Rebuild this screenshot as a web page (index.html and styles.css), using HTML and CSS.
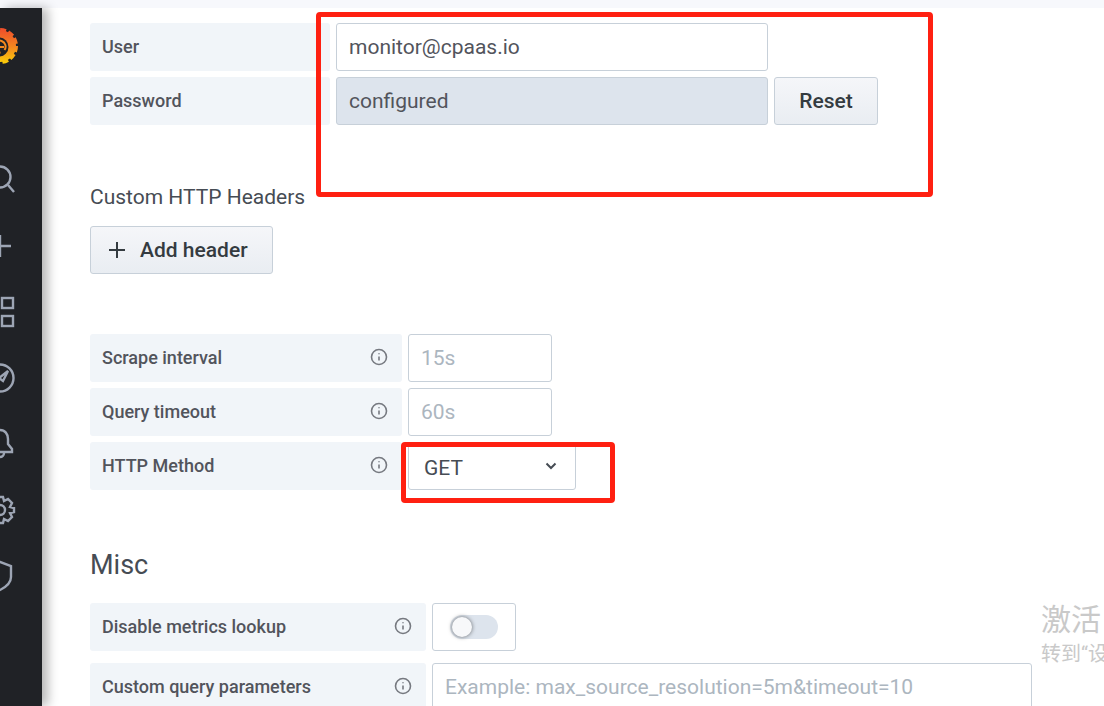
FILE: index.html
```html
<!DOCTYPE html>
<html lang="zh-CN">
<head>
    <meta charset="UTF-8">
    <meta name="viewport" content="width=device-width, initial-scale=1.0">
    <title>Data Sources - Grafana</title>
    <link rel="stylesheet" href="styles.css">
</head>
<body>
    <div class="top-strip"></div>
    <div class="app">
        <nav class="sidemenu">
            <div class="logo-item">
                <svg viewBox="0 0 40 40" width="40" height="40">
                    <defs>
                        <linearGradient id="logo-grad" x1="0" y1="0" x2="0" y2="1">
                            <stop offset="0" stop-color="#f0512a"/>
                            <stop offset="0.55" stop-color="#f58a1f"/>
                            <stop offset="1" stop-color="#fbca0a"/>
                        </linearGradient>
                    </defs>
                    <circle cx="20" cy="20" r="16.5" fill="none" stroke="url(#logo-grad)" stroke-width="3" stroke-dasharray="6 2.6"/>
                    <circle cx="20" cy="20" r="16" fill="url(#logo-grad)"/>
                    <circle cx="19" cy="21" r="9.5" fill="#202226"/>
                    <path d="M24.5 24a6 6 0 1 0-4 2.5" fill="none" stroke="#f58a1f" stroke-width="2"/>
                    <path d="M16 21h8" stroke="#f58a1f" stroke-width="2"/>
                </svg>
            </div>
            <div class="nav-item">
                <svg viewBox="0 0 32 32" width="32" height="32"><circle cx="16" cy="13" r="10.5"/><path d="M24 21l6 7"/></svg>
            </div>
            <div class="nav-item">
                <svg viewBox="0 0 32 32" width="32" height="32"><path d="M16 5v22M5 16h22"/></svg>
            </div>
            <div class="nav-item">
                <svg viewBox="0 0 32 32" width="32" height="32"><rect x="3" y="2" width="11" height="10"/><rect x="18" y="2" width="11" height="10"/><rect x="3" y="20" width="11" height="10"/><rect x="18" y="20" width="11" height="10"/></svg>
            </div>
            <div class="nav-item">
                <svg viewBox="0 0 32 32" width="32" height="32"><circle cx="16" cy="16" r="13.5"/><path d="M24 9l-5 10-4-3z"/></svg>
            </div>
            <div class="nav-item">
                <svg viewBox="0 0 32 32" width="32" height="32"><path d="M16 2c5 0 8 4 8 9v5l4 5v3H4v-3l4-5v-5c0-5 3-9 8-9z"/><path d="M12 25a4 4 0 0 0 8 0"/></svg>
            </div>
            <div class="nav-item">
                <svg viewBox="0 0 32 32" width="32" height="32"><circle cx="16" cy="16" r="5"/><path d="M13 3h6l1 4 4-2 4 4-2 4 4 1v4l-4 1 2 4-4 4-4-2-1 4h-6l-1-4-4 2-4-4 2-4-4-1v-4l4-1-2-4 4-4 4 2z"/></svg>
            </div>
            <div class="nav-item">
                <svg viewBox="0 0 32 32" width="32" height="32"><path d="M16 2l11 4v11c0 6-5 10-11 13C10 27 5 23 5 17V6z"/></svg>
            </div>
        </nav>

        <main class="content">
            <div class="form-row">
                <label class="form-label label-auth">User</label>
                <div class="form-input input-auth input-value">monitor@cpaas.io</div>
            </div>
            <div class="form-row">
                <label class="form-label label-auth">Password</label>
                <div class="form-input input-auth input-configured">configured</div>
                <button class="btn btn-reset">Reset</button>
            </div>

            <h6 class="subheading">Custom HTTP Headers</h6>
            <button class="btn btn-add">
                <svg viewBox="0 0 18 18" width="18" height="18"><path d="M9 1v16M1 9h16"/></svg>
                Add header
            </button>

            <div class="prom-settings">
                <div class="form-row">
                    <label class="form-label label-prom">Scrape interval
                        <svg class="info" viewBox="0 0 18 18" width="18" height="18"><circle cx="9" cy="9" r="7.5"/><path d="M9 8.5v4"/><path d="M9 5.2v1"/></svg>
                    </label>
                    <div class="form-input input-small input-placeholder">15s</div>
                </div>
                <div class="form-row">
                    <label class="form-label label-prom">Query timeout
                        <svg class="info" viewBox="0 0 18 18" width="18" height="18"><circle cx="9" cy="9" r="7.5"/><path d="M9 8.5v4"/><path d="M9 5.2v1"/></svg>
                    </label>
                    <div class="form-input input-small input-placeholder">60s</div>
                </div>
                <div class="form-row">
                    <label class="form-label label-prom">HTTP Method
                        <svg class="info" viewBox="0 0 18 18" width="18" height="18"><circle cx="9" cy="9" r="7.5"/><path d="M9 8.5v4"/><path d="M9 5.2v1"/></svg>
                    </label>
                    <div class="form-input select-method">
                        <span class="select-value">GET</span>
                        <svg viewBox="0 0 12 8" width="12" height="8"><path d="M1.5 1.5L6 6l4.5-4.5"/></svg>
                    </div>
                </div>
            </div>

            <h3 class="section-title">Misc</h3>
            <div class="form-row">
                <label class="form-label label-misc">Disable metrics lookup
                    <svg class="info" viewBox="0 0 18 18" width="18" height="18"><circle cx="9" cy="9" r="7.5"/><path d="M9 8.5v4"/><path d="M9 5.2v1"/></svg>
                </label>
                <div class="switch-box"><span class="switch"><span class="switch-knob"></span></span></div>
            </div>
            <div class="form-row form-row-misc">
                <label class="form-label label-misc">Custom query parameters
                    <svg class="info" viewBox="0 0 18 18" width="18" height="18"><circle cx="9" cy="9" r="7.5"/><path d="M9 8.5v4"/><path d="M9 5.2v1"/></svg>
                </label>
                <div class="form-input input-params input-placeholder">Example: max_source_resolution=5m&amp;timeout=10</div>
            </div>
        </main>
    </div>

    <div class="mark mark-auth"></div>
    <div class="mark mark-method"></div>

    <div class="watermark">
        <div class="watermark-title">激活</div>
        <div class="watermark-text">转到“设</div>
    </div>
</body>
</html>
```

FILE: styles.css
```css
* {
    box-sizing: border-box;
}
html, body {
    height: 100%;
}
body {
    margin: 0;
    font-family: 'Roboto', 'Noto Sans CJK SC', sans-serif;
    color: #464c54;
    background: white;
    overflow: hidden;
    position: relative;
}
.top-strip {
    height: 8px;
    background-color: #f7f8fc;
}
.app {
    display: flex;
    height: 698px;
}
.sidemenu {
    width: 42px;
    flex: none;
    background-color: #202226;
    box-shadow: 6px 0 10px rgba(0, 0, 0, 0.28);
    overflow: hidden;
    padding-top: 18px;
    z-index: 1;
}
.logo-item {
    height: 40px;
    margin-left: -20px;
    margin-bottom: 81px;
}
.nav-item {
    height: 66px;
    margin-left: -16px;
    display: flex;
    align-items: center;
}
.nav-item svg {
    fill: none;
    stroke: #9da5b4;
    stroke-width: 2.4;
    flex: none;
}
.content {
    flex: 1;
    padding: 15px 0 0 48px;
}
.form-row {
    display: flex;
    gap: 6px;
    margin-bottom: 6px;
}
.form-label {
    height: 48px;
    display: flex;
    align-items: center;
    justify-content: space-between;
    padding: 0 14px 2px 12px;
    font-size: 18px;
    font-weight: 500;
    color: #52545c;
    background-color: #f1f5f9;
    border-radius: 3px;
}
.label-auth {
    width: 240px;
}
.label-prom {
    width: 312px;
}
.label-misc {
    width: 336px;
}
.info {
    fill: none;
    stroke: #767980;
    stroke-width: 1.6;
}
.form-input {
    height: 48px;
    display: flex;
    align-items: center;
    padding: 0 12px;
    font-size: 21px;
    border: 1px solid #c7d0d9;
    border-radius: 3px;
    background-color: white;
}
.input-auth {
    width: 432px;
}
.input-value {
    color: #52545c;
}
.input-configured {
    background-color: #dde4ed;
    color: #52545c;
}
.input-small {
    width: 144px;
}
.input-placeholder {
    color: #acb6bf;
}
.input-params {
    width: 600px;
}
.select-method {
    width: 168px;
    padding: 0 18px 0 15px;
    justify-content: space-between;
    color: #464c54;
}
.select-value {
    padding-top: 3px;
}
.select-method svg {
    fill: none;
    stroke: #464c54;
    stroke-width: 2;
}
.btn {
    height: 48px;
    font-family: inherit;
    font-size: 21px;
    font-weight: 500;
    color: #343b40;
    background: linear-gradient(#f5f6f9, #e9edf2);
    border: 1px solid #c7d0d9;
    border-radius: 3px;
}
.btn-reset {
    width: 104px;
}
.btn-add {
    width: 183px;
    display: flex;
    align-items: center;
    gap: 14px;
    padding: 0 0 0 17px;
}
.btn-add svg {
    fill: none;
    stroke: #343b40;
    stroke-width: 2;
}
.subheading {
    margin: 59px 0 16px;
    height: 26px;
    line-height: 26px;
    font-size: 21px;
    font-weight: 400;
    color: #464c54;
}
.prom-settings {
    margin-top: 60px;
}
.section-title {
    margin: 59px 0 22px;
    height: 32px;
    line-height: 32px;
    font-size: 27px;
    font-weight: 400;
    color: #464c54;
}
.switch-box {
    width: 84px;
    height: 48px;
    display: flex;
    align-items: center;
    padding-left: 17px;
    border: 1px solid #c7d0d9;
    border-radius: 3px;
}
.switch {
    width: 48px;
    height: 24px;
    border-radius: 12px;
    background-color: #dde4ed;
    display: block;
}
.switch-knob {
    display: block;
    width: 20px;
    height: 20px;
    margin: 2px 0 0 2px;
    border-radius: 50%;
    background-color: #f7f8fa;
    box-shadow: 0 0 4px rgba(0, 0, 0, 0.55);
}
.form-row-misc {
    margin-top: 12px;
}
.mark {
    position: absolute;
    border: 5px solid #ff2011;
    border-radius: 4px;
}
.mark-auth {
    left: 316px;
    top: 12px;
    width: 617px;
    height: 185px;
}
.mark-method {
    left: 401px;
    top: 442px;
    width: 214px;
    height: 61px;
}
.watermark {
    position: absolute;
    left: 1041px;
    top: 600px;
    width: 63px;
    overflow: hidden;
    white-space: nowrap;
    color: #c9c9c9;
}
.watermark-title {
    font-size: 30px;
    line-height: 40px;
}
.watermark-text {
    font-size: 20px;
    line-height: 28px;
}
```
